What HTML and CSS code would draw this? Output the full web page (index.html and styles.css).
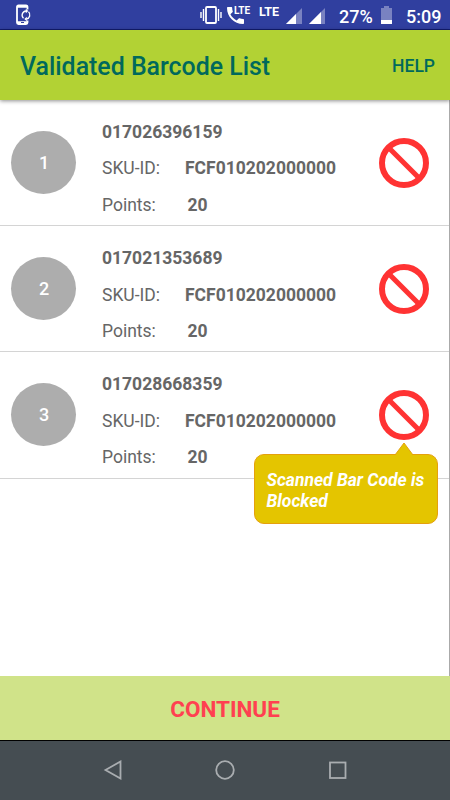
FILE: index.html
```html
<!DOCTYPE html>
<html lang="en">
<head>
  <meta charset="UTF-8" />
  <meta name="viewport" content="width=device-width, initial-scale=1.0"/>
  <title>Validated Barcode List</title>
  <link rel="stylesheet" href="styles.css">
</head>
<body>
  <svg class="defs" width="0" height="0">
    <symbol id="ban" viewBox="0 0 50 50">
      <circle cx="25" cy="25" r="22" fill="none" stroke="#ff3333" stroke-width="6"/>
      <path d="M9.5 9.5 40.5 40.5" stroke="#ff3333" stroke-width="5.2"/>
    </symbol>
  </svg>

  <div class="status-bar">
    <svg class="sync" width="18" height="22" viewBox="0 0 18 22">
      <path d="M12.500 5.500V3Q12.500 1.500 11 1.500H3.500Q2 1.500 2 3V18.500Q2 20 3.500 20H11Q12.500 20 12.500 18.500V16.500" fill="none" stroke="#fff" stroke-width="1.8"/>
      <path d="M2 2.500H12.500M2 18.500H12.500" stroke="#fff" stroke-width="2.5"/>
      <path d="M6 18.500H9" stroke="#303f9f"/>
      <path d="M8.500 14.300A4.200 4.200 0 0 1 11 7M13.500 7.800A4.200 4.200 0 0 1 11.500 15" fill="none" stroke="#fff" stroke-width="1.300"/>
      <path d="M10.800 4.800 13.300 7 10.800 9.200ZM11.800 12.800V17.200L9.300 15Z" fill="#fff"/>
    </svg>
    <svg class="vibrate" width="22" height="20" viewBox="0 0 22 20">
      <rect x="6" y="2" width="10" height="16" rx="1" fill="none" stroke="#fff" stroke-width="1.8"/>
      <path d="M3.500 4V16M18.500 4V16M1 7V13M21 7V13" stroke="#fff" stroke-width="1.4"/>
    </svg>
    <div class="call">
      <svg width="18" height="18" viewBox="3 3 18 18">
        <path fill="#fff" d="M6.6 10.8c1.4 2.8 3.8 5.1 6.6 6.6l2.2-2.2c.3-.3.7-.4 1-.2 1.1.4 2.3.6 3.6.6.5 0 1 .4 1 1V20c0 .6-.5 1-1 1C10.600 21 3 13.400 3 4c0-.5.5-1 1-1h3.500c.5 0 1 .5 1 1 0 1.200.2 2.400.6 3.600.1.3 0 .7-.3 1z"/>
      </svg>
      <span>LTE</span>
    </div>
    <span class="lte">LTE</span>
    <svg class="signal" width="16" height="16" viewBox="0 0 16 16">
      <path d="M0 16 16 0V16Z" fill="#7982c1"/>
      <path d="M0 16 10 6V16Z" fill="#fff"/>
    </svg>
    <svg class="signal second" width="16" height="16" viewBox="0 0 16 16">
      <path d="M0 16 16 0V16Z" fill="#7982c1"/>
      <path d="M0 16 12 4V16Z" fill="#fff"/>
    </svg>
    <span class="percent">27%</span>
    <svg class="battery" width="11" height="18" viewBox="0 0 11 18">
      <path d="M3 0H8V2H11V18H0V2H3Z" fill="#7982c1"/>
      <path d="M0 14H11V18H0Z" fill="#fff"/>
    </svg>
    <span class="time">5:09</span>
  </div>

  <div class="app-bar">
    <span class="title">Validated Barcode List</span>
    <span class="help">HELP</span>
  </div>

  <div class="list">
    <div class="row">
      <div class="number">1</div>
      <div class="info">
        <b>017026396159</b>
        <div><span class="label">SKU-ID:</span><b>FCF010202000000</b></div>
        <div><span class="label points">Points:</span><b>20</b></div>
      </div>
      <svg class="ban"><use href="#ban"/></svg>
    </div>
    <div class="row">
      <div class="number">2</div>
      <div class="info">
        <b>017021353689</b>
        <div><span class="label">SKU-ID:</span><b>FCF010202000000</b></div>
        <div><span class="label points">Points:</span><b>20</b></div>
      </div>
      <svg class="ban"><use href="#ban"/></svg>
    </div>
    <div class="row">
      <div class="number">3</div>
      <div class="info">
        <b>017028668359</b>
        <div><span class="label">SKU-ID:</span><b>FCF010202000000</b></div>
        <div><span class="label points">Points:</span><b>20</b></div>
      </div>
      <svg class="ban"><use href="#ban"/></svg>
      <div class="tooltip">
        <svg class="arrow" width="18" height="14" viewBox="0 0 18 14">
          <path d="M0 13 9 1 18 13V14H0Z" fill="#e4c500"/>
          <path d="M0 13 9 1 18 13" fill="none" stroke="#e5a00d"/>
        </svg>
        Scanned Bar Code is<br>Blocked
      </div>
    </div>
  </div>

  <div class="continue">CONTINUE</div>

  <div class="nav-bar">
    <svg width="20" height="20" viewBox="0 0 20 20"><path d="M2.500 10 17.500 1.500V18.500Z"/></svg>
    <svg width="20" height="20" viewBox="0 0 20 20"><circle cx="10" cy="10" r="8.800"/></svg>
    <svg width="20" height="20" viewBox="0 0 20 20"><rect x="2" y="2.500" width="15.500" height="15.500"/></svg>
  </div>
</body>
</html>
```
FILE: styles.css
```css
  body {
    font-family: Roboto, sans-serif;
    background-color: #fff;
    display: flex;
    flex-direction: column;
    width: 450px;
    height: 800px;
    margin: 0;
    overflow: hidden;
  }

  svg {
    display: block;
    flex: none;
  }

  .defs {
    position: absolute;
  }

  .status-bar {
    box-sizing: border-box;
    height: 30px;
    flex: none;
    display: flex;
    align-items: center;
    padding: 0 11px 0 15px;
    background-color: #303f9f;
    border-bottom: 1px solid #131d70;
    color: #fff;
    white-space: nowrap;
  }

  .vibrate {
    margin-left: auto;
  }

  .call {
    display: flex;
    align-items: flex-start;
    width: 24px;
    margin-left: 5px;
  }

  .call svg {
    width: 17px;
    height: 17px;
    margin-top: 1px;
  }

  .call span {
    font-size: 10px;
    line-height: 9px;
    font-weight: 700;
    margin-left: -10px;
  }

  .lte {
    font-size: 12.5px;
    line-height: 12px;
    font-weight: 700;
    width: 22px;
    margin: 0 5px 6px 8px;
  }

  .signal {
    margin-top: 2px;
  }

  .second {
    margin-left: 7px;
  }

  .percent {
    font-size: 18px;
    font-weight: 500;
    width: 33px;
    margin-left: 14px;
    margin-top: 3px;
  }

  .battery {
    margin-left: 9px;
    margin-top: 1px;
  }

  .time {
    font-size: 18px;
    font-weight: 500;
    width: 33px;
    margin-left: 14px;
    margin-top: 3px;
  }

  .app-bar {
    box-sizing: border-box;
    height: 70px;
    flex: none;
    display: flex;
    align-items: center;
    justify-content: space-between;
    padding: 2px 15px 0 20px;
    background-color: #b2d234;
    color: #00695c;
    font-weight: 500;
    box-shadow: 0 1px 4px rgba(0,0,0,0.45);
    z-index: 1;
  }

  .title {
    font-size: 24.9px;
  }

  .help {
    font-size: 17.5px;
  }

  .list {
    flex: 1;
    border-right: 1px solid #aaa;
  }

  .row {
    box-sizing: border-box;
    position: relative;
    height: 126.2px;
    display: flex;
    align-items: center;
    padding: 0 20px 0 11px;
    border-bottom: 1px solid #d4d4d4;
  }

  .number {
    width: 65px;
    height: 63px;
    line-height: 64px;
    border-radius: 50%;
    background-color: #adadad;
    color: #fff;
    font-size: 18px;
    font-weight: 500;
    text-align: center;
    text-indent: 1px;
  }

  .info {
    flex: 1;
    margin-left: 26px;
    padding-top: 12px;
    font-size: 17.5px;
    line-height: 36.4px;
    color: #666;
  }

  .info b {
    font-weight: 700;
  }

  .label {
    display: inline-block;
    width: 83px;
  }

  .points {
    width: 85.5px;
  }

  .ban {
    width: 50px;
    height: 50px;
  }

  .tooltip {
    box-sizing: border-box;
    position: absolute;
    z-index: 2;
    left: 253.5px;
    top: 101.5px;
    width: 184.5px;
    height: 70px;
    padding: 15px 0 0 12px;
    background-color: #e4c500;
    border: 1px solid #e5a00d;
    border-radius: 10px;
    color: #fff;
    font-size: 17.5px;
    font-style: italic;
    font-weight: 700;
    line-height: 21px;
    white-space: nowrap;
  }

  .arrow {
    position: absolute;
    left: 140px;
    top: -13px;
  }

  .continue {
    height: 64px;
    line-height: 66px;
    flex: none;
    background-color: #d0e389;
    color: #ff4050;
    font-size: 22.5px;
    font-weight: 700;
    text-align: center;
  }

  .nav-bar {
    box-sizing: border-box;
    height: 60px;
    flex: none;
    display: flex;
    align-items: center;
    justify-content: center;
    gap: 92.5px;
    padding-bottom: 1px;
    background-color: #454d52;
    border-top: 1px solid #000;
  }

  .nav-bar svg {
    fill: none;
    stroke: #a9adb0;
    stroke-width: 1.8;
  }
```
